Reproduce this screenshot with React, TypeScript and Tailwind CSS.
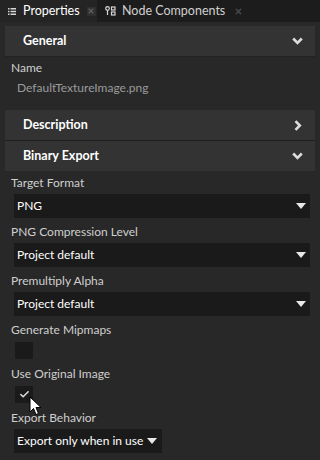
import { Check, X } from "lucide-react";

function TabIconList() {
  return (
    <svg width="8" height="7" viewBox="0 0 8 7" className="text-[#d6d6d6]">
      <rect x="0" y="0" width="1.5" height="1.5" fill="currentColor" />
      <rect x="2.5" y="0" width="5.5" height="1.5" fill="currentColor" />
      <rect x="0" y="2.75" width="1.5" height="1.5" fill="currentColor" />
      <rect x="2.5" y="2.75" width="5.5" height="1.5" fill="currentColor" />
      <rect x="0" y="5.5" width="1.5" height="1.5" fill="currentColor" />
      <rect x="2.5" y="5.5" width="5.5" height="1.5" fill="currentColor" />
    </svg>
  );
}

function TabIconNodes() {
  return (
    <svg width="11" height="10" viewBox="0 0 11 10" className="text-[#d6d6d6]">
      <circle cx="2.5" cy="2.5" r="1.8" fill="none" stroke="currentColor" strokeWidth="1.2" />
      <line x1="2.5" y1="4.3" x2="2.5" y2="9" stroke="currentColor" strokeWidth="1.2" />
      <rect x="6.5" y="1" width="3.5" height="3" fill="none" stroke="currentColor" strokeWidth="1.2" />
      <rect x="6.5" y="6" width="3.5" height="3" fill="none" stroke="currentColor" strokeWidth="1.2" />
    </svg>
  );
}

function Caret() {
  return (
    <svg width="10" height="6" viewBox="0 0 10 6">
      <path d="M0 0 H10 L5 6 Z" fill="#e8e8e8" />
    </svg>
  );
}

function Chevron({ open }: { open: boolean }) {
  return open ? (
    <svg width="11" height="8" viewBox="0 0 11 8">
      <path d="M1.2 1.5 L5.5 5.8 L9.8 1.5" fill="none" stroke="#dcdcdc" strokeWidth="2.6" />
    </svg>
  ) : (
    <svg width="8" height="11" viewBox="0 0 8 11">
      <path d="M1.5 1.2 L5.8 5.5 L1.5 9.8" fill="none" stroke="#dcdcdc" strokeWidth="2.6" />
    </svg>
  );
}

function Section({ title, open }: { title: string; open: boolean }) {
  return (
    <div className="mx-[5px] h-[30px] bg-[#333333] flex items-center justify-between pl-[18px] pr-[12px]">
      <span className="text-[12.5px] font-bold text-white">{title}</span>
      <div className="w-[11px] flex justify-center">
        <Chevron open={open} />
      </div>
    </div>
  );
}

function Label({ text }: { text: string }) {
  return <div className="pl-[11px] h-[22px] flex items-center text-[12px] text-[#cfcfcf] whitespace-nowrap">{text}</div>;
}

function Select({ value, short }: { value: string; short?: boolean }) {
  return (
    <div
      className={
        short
          ? "ml-[14px] w-[148px] h-[24px] bg-[#1a1a1a] flex items-center justify-between pl-[3px] pr-[5px]"
          : "ml-[14px] mr-[10px] h-[24px] bg-[#1a1a1a] flex items-center justify-between pl-[3px] pr-[4px]"
      }
    >
      <span className="text-[12px] text-white whitespace-nowrap">{value}</span>
      <Caret />
    </div>
  );
}

function Checkbox({ checked }: { checked?: boolean }) {
  return (
    <div className="h-[19px] pl-[15px] pt-[1px]">
      <div className="w-[18px] h-[17px] bg-[#1a1a1a] flex items-center justify-center">
        {checked && <Check size={11} strokeWidth={3.5} className="text-[#d8d8d8]" />}
      </div>
    </div>
  );
}

export default function App() {
  return (
    <div className="w-[320px] h-[460px] bg-[#282828] flex flex-col overflow-hidden font-['Lato',sans-serif] relative">
      {/* tab strip */}
      <div className="h-[22px] bg-[#1c1c1c] flex items-stretch shrink-0">
        <div className="w-[97px] bg-[#242424] flex items-center pl-[8px]">
          <TabIconList />
          <span className="ml-[7px] text-[12.5px] text-white">Properties</span>
          <span className="ml-[7px] w-[9px] h-[9px] bg-[#303030] flex items-center justify-center">
            <X size={8} strokeWidth={3.5} className="text-[#5e5e5e]" />
          </span>
        </div>
        <div className="flex items-center pl-[8px]">
          <TabIconNodes />
          <span className="ml-[6px] text-[12.5px] text-[#d0d0d0]">Node Components</span>
          <X size={9} strokeWidth={3.5} className="ml-[9px] text-[#4a4a4a]" />
        </div>
      </div>

      <div className="h-[4px] shrink-0" />
      <Section title="General" open />
      <div className="mx-[5px] h-px bg-[#222222]" />

      <Label text="Name" />
      <div className="pl-[17px] h-[18px] flex items-center text-[12px] text-[#9b9b9b]">DefaultTextureImage.png</div>

      <div className="h-[13px]" />
      <Section title="Description" open={false} />
      <div className="mx-[5px] h-px bg-[#1e1e1e]" />
      <Section title="Binary Export" open />
      <div className="h-px" />

      <div className="flex flex-col gap-[3px]">
        <div>
          <Label text="Target Format" />
          <Select value="PNG" />
        </div>
        <div>
          <Label text="PNG Compression Level" />
          <Select value="Project default" />
        </div>
        <div>
          <Label text="Premultiply Alpha" />
          <Select value="Project default" />
        </div>
        <div>
          <Label text="Generate Mipmaps" />
          <Checkbox />
        </div>
        <div>
          <Label text="Use Original Image" />
          <Checkbox checked />
        </div>
        <div>
          <Label text="Export Behavior" />
          <Select value="Export only when in use" short />
        </div>
      </div>

      {/* mouse pointer */}
      <svg className="absolute left-[29px] top-[396px]" width="13" height="20" viewBox="0 0 13 20">
        <path d="M1 1 L1 16 L4.5 12.5 L7 18.5 L9.5 17.5 L7 11.5 L12 11.5 Z" fill="white" stroke="black" strokeWidth="1" />
      </svg>
    </div>
  );
}
